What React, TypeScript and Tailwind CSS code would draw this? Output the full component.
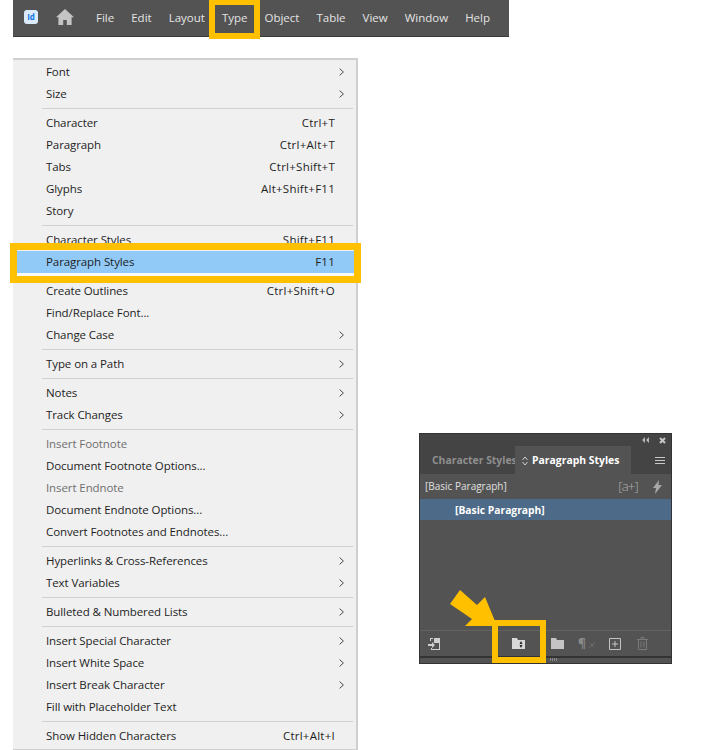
import React from 'react';

type Row = { label: string; shortcut?: string; arrow?: boolean; disabled?: boolean; active?: boolean };

const groups: Row[][] = [
    [{ label: 'Font', arrow: true }, { label: 'Size', arrow: true }],
    [
        { label: 'Character', shortcut: 'Ctrl+T' },
        { label: 'Paragraph', shortcut: 'Ctrl+Alt+T' },
        { label: 'Tabs', shortcut: 'Ctrl+Shift+T' },
        { label: 'Glyphs', shortcut: 'Alt+Shift+F11' },
        { label: 'Story' },
    ],
    [
        { label: 'Character Styles', shortcut: 'Shift+F11' },
        { label: 'Paragraph Styles', shortcut: 'F11', active: true },
    ],
    [
        { label: 'Create Outlines', shortcut: 'Ctrl+Shift+O' },
        { label: 'Find/Replace Font...' },
        { label: 'Change Case', arrow: true },
    ],
    [{ label: 'Type on a Path', arrow: true }],
    [{ label: 'Notes', arrow: true }, { label: 'Track Changes', arrow: true }],
    [
        { label: 'Insert Footnote', disabled: true },
        { label: 'Document Footnote Options...' },
        { label: 'Insert Endnote', disabled: true },
        { label: 'Document Endnote Options...' },
        { label: 'Convert Footnotes and Endnotes...' },
    ],
    [{ label: 'Hyperlinks & Cross-References', arrow: true }, { label: 'Text Variables', arrow: true }],
    [{ label: 'Bulleted & Numbered Lists', arrow: true }],
    [
        { label: 'Insert Special Character', arrow: true },
        { label: 'Insert White Space', arrow: true },
        { label: 'Insert Break Character', arrow: true },
        { label: 'Fill with Placeholder Text' },
    ],
    [{ label: 'Show Hidden Characters', shortcut: 'Ctrl+Alt+I' }],
];

const topItems = ['File', 'Edit', 'Layout', 'Type', 'Object', 'Table', 'View', 'Window', 'Help'];

const MenuRow: React.FC<{ row: Row }> = ({ row }) => (
    <div className={`relative flex h-[22px] items-center pl-[33px] pr-[21px] ${row.disabled ? 'text-[#6f6f6f]' : 'text-[#1e1e1e]'} ${row.active ? 'bg-[#91c9f7] shadow-[0_3px_0_#fafafa]' : ''}`}>
        <span className="flex-1">{row.label}</span>
        {row.shortcut && <span className="tracking-[0.25px]">{row.shortcut}</span>}
        {row.arrow && (
            <svg className="absolute right-[12px] top-[7px]" width="5" height="8" viewBox="0 0 5 8" fill="none" stroke="#4a4a4a" strokeWidth="1">
                <path d="M.6.6 4.4 4 .6 7.4" />
            </svg>
        )}
        {row.active && <div className="absolute left-[-3px] right-[-5px] top-[-8px] h-[40px] border-[7px] border-[#ffc000]" />}
    </div>
);

const App: React.FC = () => {
    return (
        <div className="relative h-[750px] w-[715px] overflow-hidden bg-white font-['Open_Sans','Liberation_Sans',sans-serif]">
            <div className="relative ml-[13px] flex h-[37px] w-[496px] items-center border-b border-[#3a3a3a] bg-[#535353] text-[11.5px] text-[#e4e4e4]">
                <div className="mb-[2px] ml-[11px] flex h-[14px] w-[14px] items-center justify-center rounded-[3px] bg-[#dcebfb] text-[8px] font-bold leading-none text-[#1473e6]">Id</div>
                <svg className="mb-[2px] ml-[18px]" width="18" height="16" viewBox="0 0 18 16" fill="#c4c4c4">
                    <path d="M9 0 18 8.2h-2.4V16h-4.8v-5H7.2v5H2.4V8.2H0z" />
                </svg>
                <div className="ml-[22px] flex gap-[17px]">
                    {topItems.map(item => (
                        <div key={item} className="relative">
                            {item}
                            {item === 'Type' && <div className="absolute left-[-13px] top-[-9px] h-[39px] w-[51px] border-[6px] border-t-[5px] border-[#ffc000]" />}
                        </div>
                    ))}
                </div>
            </div>
            <div className="flex items-start">
                <div className="ml-[13px] mt-[21px] h-[692px] w-[345px] border-b border-r-2 border-t-2 border-[#cfcfcf] bg-[#f0f0f0] pt-[1px] text-[11.5px] tracking-[-0.09px]">
                    {groups.map((group, i) => (
                        <div key={i}>
                            {i > 0 && (
                                <div className="flex h-[7px] items-center pl-[29px] pr-[3px]">
                                    <div className="h-px flex-1 bg-[#d0d0d0]" />
                                </div>
                            )}
                            {group.map(row => <MenuRow key={row.label} row={row} />)}
                        </div>
                    ))}
                </div>
                <div className="relative ml-[61px] mt-[396px] flex h-[231px] w-[253px] flex-col whitespace-nowrap border border-[#333] bg-[#535353]">
                    <div className="flex h-[12px] items-center justify-end gap-[10px] bg-[#444] pr-[5px]">
                        <svg width="7" height="6" viewBox="0 0 7 6" fill="#b5b5b5"><path d="M3 0v6L0 3zM7 0v6L4 3z" /></svg>
                        <svg width="7" height="7" viewBox="0 0 7 7" stroke="#c8c8c8" strokeWidth="2"><path d="M1 1l5 5M6 1 1 6" /></svg>
                    </div>
                    <div className="flex h-[28px] items-center bg-[#444] text-[10.4px]">
                        <div className="w-[95px] pl-[12px] pt-[2px] font-bold text-[#8f8f8f]">Character Styles</div>
                        <div className="flex h-full w-[116px] items-center bg-[#535353] pl-[7px] pt-[2px] font-bold text-white">
                            <svg className="mr-[4px]" width="6" height="10" viewBox="0 0 6 10" fill="none" stroke="#cfcfcf"><path d="M.5 4 3 1l2.500 3M.5 6 3 9l2.500-3" /></svg>
                            Paragraph Styles
                        </div>
                        <svg className="ml-[24px]" width="10" height="7" viewBox="0 0 10 7" fill="#c8c8c8"><path d="M0 0h10v1H0zM0 3h10v1H0zM0 6h10v1H0z" /></svg>
                    </div>
                    <div className="flex h-[25px] items-center pl-[5px] pr-[9px] text-[10px] text-[#e0e0e0]">
                        <span className="flex-1">[Basic Paragraph]</span>
                        <span className="mr-[15px] text-[13px] font-light tracking-[-0.7px] text-[#b0b0b0]">[a+]</span>
                        <svg width="9" height="14" viewBox="0 0 9 14" fill="#a8a8a8"><path d="M6 0 0 8h3l-1 6 7-9H5.500z" /></svg>
                    </div>
                    <div className="flex h-[21px] items-center bg-[#4d6a88] pl-[35px] pt-[2px] text-[10.3px] font-bold text-white">[Basic Paragraph]</div>
                    <div className="flex-1" />
                    <div className="flex h-[26px] items-center border-t border-[#626262]">
                        <svg className="ml-[8px]" width="12" height="12" viewBox="0 0 12 12" fill="#cfcfcf"><path d="M2 0h3v1H3v2H2zM6 0h6v12H3v-2h1v1h7V5H6zM0 6h4V4l3 3-3 3V8H0z" /></svg>
                        <svg className="ml-[72px]" width="13" height="11" viewBox="0 0 13 11" fill="#d8d8d8"><path d="M0 0h5l1 2h7v9H0z" /><path d="M9 3l1.500 3h-3zM9 10 7.500 7h3z" fill="#222" /></svg>
                        <svg className="ml-[26px]" width="13" height="11" viewBox="0 0 13 11" fill="#c4c4c4"><path d="M0 0h5l1 2h7v9H0z" /></svg>
                        <div className="ml-[14px] flex w-[17px] items-center">
                            <span className="text-[12px] leading-none font-bold text-[#8a8a8a]">¶</span>
                            <svg className="ml-[3px] mt-[3px]" width="6" height="6" viewBox="0 0 6 6" stroke="#6e6e6e"><path d="M0 6 6 0M1 1l4 4" /></svg>
                        </div>
                        <svg className="ml-[14px]" width="12" height="12" viewBox="0 0 12 12" fill="none" stroke="#c4c4c4"><path d="M.5.5h11v11H.5zM6 3v6M3 6h6" /></svg>
                        <svg className="ml-[16px]" width="11" height="13" viewBox="0 0 11 13" fill="none" stroke="#7a7a7a"><path d="M0 2.500h11M4 2.500V.5h3v2M1.500 2.500v10h8v-10M4 4.500v6M7 4.500v6" /></svg>
                    </div>
                    <div className="h-[2px] bg-[#333]" />
                    <div className="flex h-[5px] items-start bg-[#535353] pl-[130px]">
                        <svg width="8" height="3" viewBox="0 0 8 3" stroke="#8a8a8a"><path d="M.5 0v3M2.500 0v3M4.500 0v3M6.500 0v3" /></svg>
                    </div>
                    <div className="absolute left-[72px] top-[186px] h-[43px] w-[54px] border-[6px] border-[#ffc000]" />
                    <svg className="absolute left-[29px] top-[155px]" width="50" height="40" viewBox="0 0 50 40" fill="#ffc000">
                        <path d="M11 1 1 15 23 30 16 37H48L36 8 28 16z" />
                    </svg>
                </div>
            </div>
        </div>
    );
};

export default App;
